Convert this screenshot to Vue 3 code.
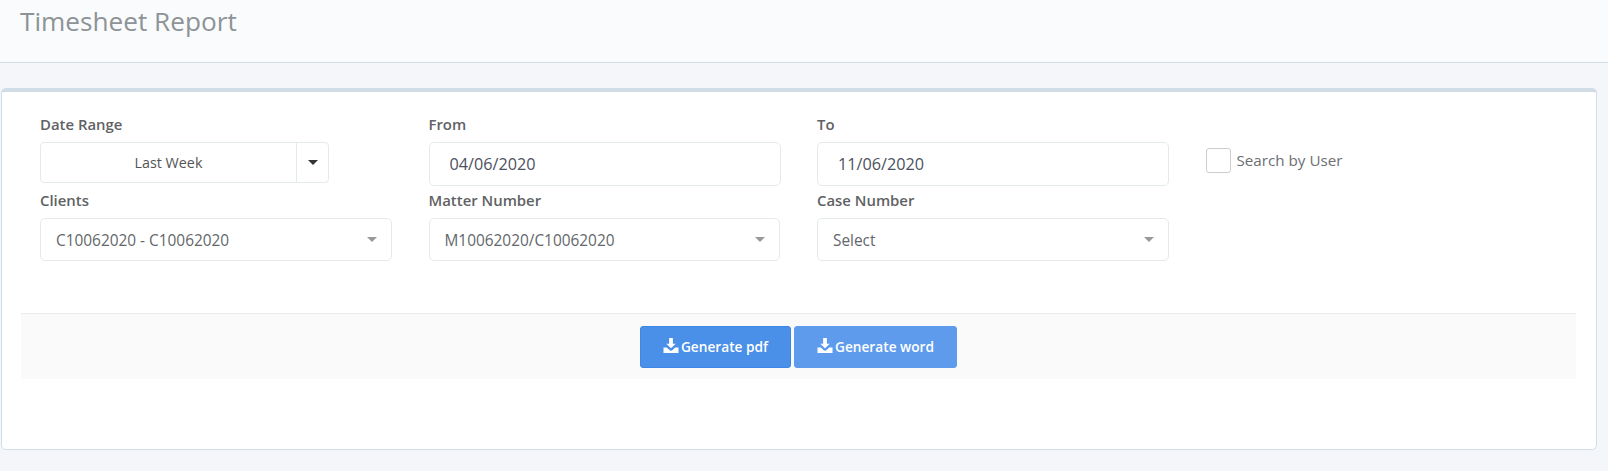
<script setup>
const selects = [
  { label: 'Clients', value: 'C10062020 - C10062020' },
  { label: 'Matter Number', value: 'M10062020/C10062020' },
  { label: 'Case Number', value: 'Select' }
]
</script>

<template>
  <div class="page">
    <header class="head"><h1>Timesheet Report</h1></header>
    <main class="card">
      <div class="form">
        <div class="field">
          <label>Date Range</label>
          <div class="split">
            <span class="split-text">Last Week</span>
            <span class="split-caret"><i class="caret dark"></i></span>
          </div>
        </div>
        <div class="field">
          <label>From</label>
          <div class="date">04/06/2020</div>
        </div>
        <div class="field">
          <label>To</label>
          <div class="date">11/06/2020</div>
        </div>
        <div class="check">
          <span class="box"></span>
          <span>Search by User</span>
        </div>
        <div class="field" v-for="s in selects" :key="s.label">
          <label>{{ s.label }}</label>
          <div class="select">
            <span class="select-text">{{ s.value }}</span>
            <i class="caret"></i>
          </div>
        </div>
      </div>
      <div class="actions">
        <button class="btn">
          <svg viewBox="0 0 16 16" class="ico"><path d="M6 0h4v6h3l-5 5-5-5h3z"/><path d="M0 10h3.5l2.5 2.5a2.8 2.8 0 0 0 4 0l2.5-2.5H16v6H0z"/></svg><span class="btn-text">Generate pdf</span>
        </button>
        <button class="btn light">
          <svg viewBox="0 0 16 16" class="ico"><path d="M6 0h4v6h3l-5 5-5-5h3z"/><path d="M0 10h3.5l2.5 2.5a2.8 2.8 0 0 0 4 0l2.5-2.5H16v6H0z"/></svg><span class="btn-text">Generate word</span>
        </button>
      </div>
    </main>
  </div>
</template>

<style>
html, body { margin: 0; background: #f4f6fa; }
</style>

<style scoped>
.page {
  height: 471px;
  overflow: hidden;
  background: #f4f6fa;
  font-family: "Open Sans", "Noto Sans", sans-serif;
  color: #5f6368;
  box-sizing: border-box;
}
.head {
  height: 62px;
  background: #fafbfd;
  border-bottom: 1px solid #cddde3;
  padding-left: 20px;
}
.head h1 {
  margin: 0;
  font-size: 26.2px;
  font-weight: 400;
  line-height: 43px;
  color: #8d9396;
}
.card {
  width: 1596px;
  height: 362px;
  margin: 25px 0 0 1px;
  box-sizing: border-box;
  background: #fff;
  border: 1px solid #d3dde5;
  border-top: 4px solid #d0dde6;
  border-radius: 5px;
  padding: 0 19px;
}
.form {
  display: grid;
  grid-template-columns: 352px 352px 352px 1fr;
  column-gap: 36.5px;
  padding: 22px 0 0 19px;
  height: 221px;
  box-sizing: border-box;
  grid-template-rows: 76px 62px;
  align-content: start;
}
.field label {
  display: block;
  font-size: 14.9px;
  font-weight: 600;
  line-height: 20px;
  color: #5f6264;
  margin-bottom: 8px;
}
.split {
  width: 289px;
  height: 41px;
  display: flex;
  box-sizing: border-box;
  border: 1px solid #e4eaec;
  border-radius: 4px;
  font-size: 14.3px;
  color: #555;
}
.split-text {
  flex: 1;
  text-align: center;
  line-height: 40px;
  border-right: 1px solid #e4eaec;
}
.split-caret {
  width: 31px;
  display: flex;
  align-items: center;
  justify-content: center;
}
.date, .select {
  box-sizing: border-box;
  width: 352px;
  border: 1px solid #e4eaec;
  border-radius: 5px;
  display: flex;
  align-items: center;
  justify-content: space-between;
}
.date {
  height: 44px;
  padding-left: 20px;
  color: #4c5160;
  font-size: 16.2px;
}
.select {
  width: 351.5px;
  height: 43px;
  padding: 0 14px 0 15px;
  color: #63676b;
  font-size: 15.4px;
}
.select-text {
  padding-top: 2px;
}
.caret {
  width: 0;
  height: 0;
  border-left: 5px solid transparent;
  border-right: 5px solid transparent;
  border-top: 5px solid #999;
}
.caret.dark { border-top-color: #333; }
.check {
  display: flex;
  align-items: flex-start;
  gap: 6px;
  padding-top: 34px;
  font-size: 15.2px;
  line-height: 24px;
  color: #6b6f73;
}
.box {
  width: 25px;
  height: 25px;
  box-sizing: border-box;
  border: 1px solid #c9ced1;
  border-radius: 3px;
  background: #fff;
}
.actions {
  width: 1555px;
  height: 66px;
  box-sizing: border-box;
  background: #fafafa;
  border-top: 1px solid #eaeaea;
  display: flex;
  justify-content: center;
  align-items: flex-start;
  gap: 3px;
  padding: 12px 0 0 0;
}
.btn {
  height: 42px;
  width: 151px;
  box-sizing: border-box;
  background: #4a8fe8;
  border: 1px solid #3c86e6;
  border-radius: 3px;
  color: #fff;
  font-family: inherit;
  font-size: 13.7px;
  font-weight: 600;
  display: flex;
  align-items: center;
  justify-content: center;
  padding: 0;
}
.btn-text {
  margin-top: -1px;
}
.btn.light {
  width: 163px;
  background: #5e9bec;
  border-color: #5e9bec;
}
.ico {
  width: 16px;
  height: 15px;
  fill: #fff;
  margin-right: 2px;
  margin-top: -3px;
}
</style>
